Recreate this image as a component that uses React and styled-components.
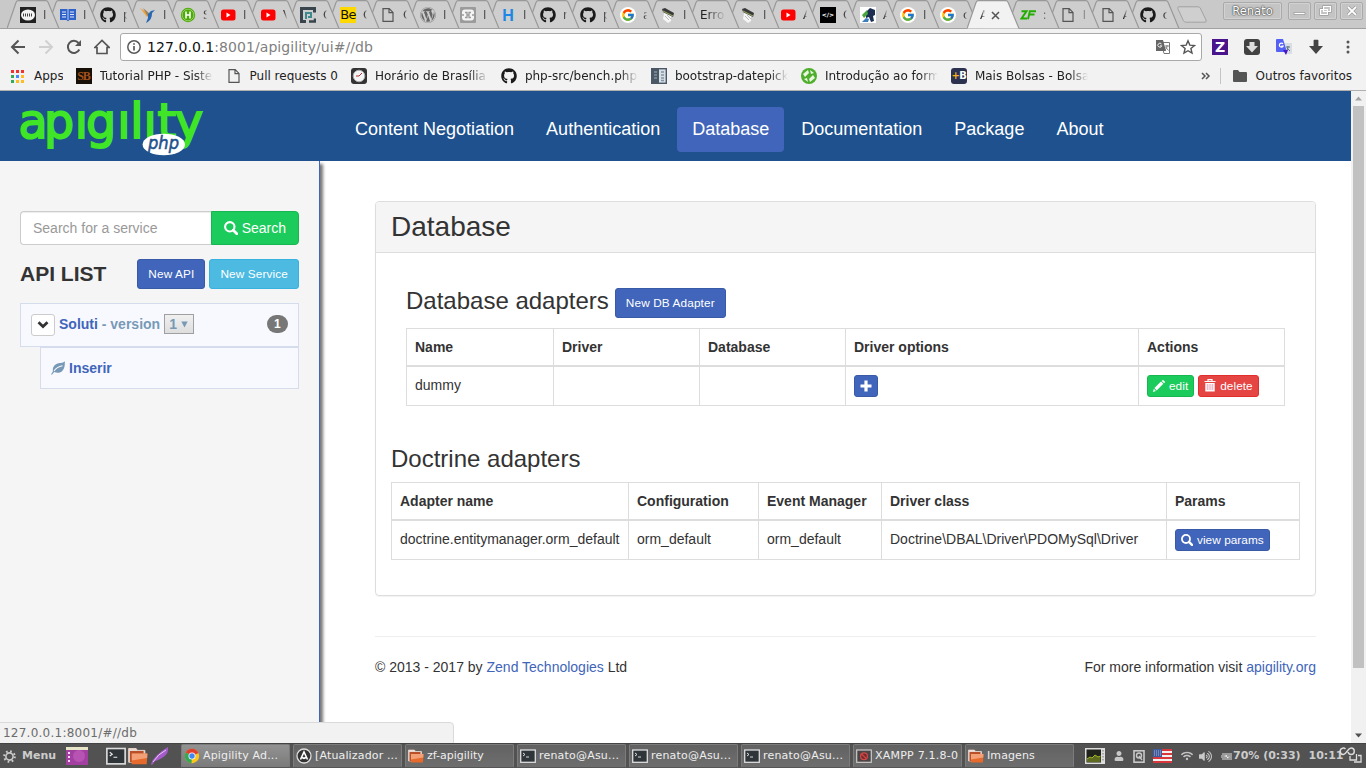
import React from 'react';
import styled, { createGlobalStyle, css } from 'styled-components';
import { FaGithub, FaWordpress, FaUser, FaWifi, FaVolumeUp } from 'react-icons/fa';
import { FcGoogle } from 'react-icons/fc';

const UI = '"DejaVu Sans", Verdana, sans-serif';
const PAGE = '"Liberation Sans", Arial, sans-serif';

const GlobalStyle = createGlobalStyle`
  * { box-sizing: border-box; }
  html, body { margin: 0; padding: 0; overflow: hidden; background: #fff; }
  svg { display: block; flex: none; }
`;

const Screen = styled.div`
  width: 1366px;
  height: 768px;
  display: flex;
  flex-direction: column;
  position: relative;
  overflow: hidden;
  font-family: ${PAGE};
  font-size: 14px;
  line-height: 20px;
  color: #333;
`;

/* ---------- browser tabs ---------- */

const TabStrip = styled.div`
  height: 29px;
  flex: none;
  display: flex;
  padding-left: 7px;
  background: #c9c9c9;
  border-bottom: 1px solid #a0a0a0;
  font-family: ${UI};
  font-size: 12px;
  color: #222;
`;

const TabBox = styled.div`
  flex: 0 0 39.92px;
  height: 29px;
  position: relative;
  z-index: ${(p) => p.$z};
  display: flex;
  align-items: flex-start;
  gap: 7px;
  padding: 7px 0 0 13px;
`;

const TabShape = styled.svg`
  position: absolute;
  left: 0;
  top: 0;
  z-index: -1;
`;

const TabLabel = styled.span`
  width: ${(p) => p.$w || 4}px;
  height: 16px;
  line-height: 16px;
  overflow: hidden;
  white-space: nowrap;
  -webkit-mask-image: linear-gradient(to right, #000 20%, transparent 105%);
  mask-image: linear-gradient(to right, #000 20%, transparent 105%);
`;

const CloseMark = styled.svg`
  margin: 4px 0 0 -1px;
`;

const NewTab = styled.svg`
  margin: 6px 0 0 10px;
`;

const WindowControls = styled.div`
  margin-left: auto;
  padding: 2px 3px 0 0;
  display: flex;
  gap: 3px;
`;

const WindowButton = styled.div`
  width: ${(p) => p.$w || 23}px;
  height: 18px;
  margin-right: ${(p) => p.$mr || 0}px;
  border: 1px solid #aaa;
  border-radius: 2px;
  background: #c4c4c4;
  box-shadow: inset 0 0 0 1px #d2d2d2;
  color: #fff;
  font-size: 11.5px;
  line-height: 15px;
  text-shadow: 0 0 1px #444, 0 0 1px #444, 0 0 2px #444;
  display: flex;
  justify-content: center;
  align-items: center;
`;

/* ---------- toolbar ---------- */

const Toolbar = styled.div`
  height: 36px;
  flex: none;
  display: flex;
  align-items: center;
  background: #f2f2f2;
  font-family: ${UI};
`;

const NavButtons = styled.div`
  display: flex;
  width: 120px;
  padding-left: 10px;
  gap: 12px;
`;

const Omnibox = styled.div`
  width: 1082px;
  height: 28px;
  display: flex;
  align-items: center;
  background: #fff;
  border: 1px solid #a9a9a9;
  border-radius: 3px;
  padding: 0 5px 0 6px;
  gap: 6px;
  font-size: 14px;
  letter-spacing: 0.06px;
  color: #808080;
  b { font-weight: 400; color: #111; }
`;

const OmniActions = styled.div`
  margin-left: auto;
  display: flex;
  gap: 9px;
`;

const Extensions = styled.div`
  display: flex;
  align-items: center;
  gap: 16px;
  padding-left: 10px;
`;

const BookmarkBar = styled.div`
  height: 26px;
  flex: none;
  display: flex;
  align-items: center;
  padding: 0 14px 3px 10px;
  background: #f2f2f2;
  border-bottom: 1px solid #b0b0b0;
  font-family: ${UI};
  font-size: 12px;
  color: #222;
`;

const Bookmark = styled.div`
  display: flex;
  flex: none;
  align-items: center;
  gap: 8px;
  margin-right: 13px;
  > span:last-child {
    width: ${(p) => p.$w || 113}px;
    overflow: hidden;
    white-space: nowrap;
    ${(p) =>
      !p.$w &&
      css`
        -webkit-mask-image: linear-gradient(to right, #000 84%, transparent 100%);
        mask-image: linear-gradient(to right, #000 84%, transparent 100%);
      `}
  }
`;

const BookmarkEnd = styled.div`
  margin-left: auto;
  display: flex;
  align-items: center;
  gap: 9px;
  white-space: nowrap;
`;

const Divider = styled.i`
  width: 1px;
  height: 16px;
  margin: 0 3px 0 0;
  background: #c4c4c4;
`;

/* ---------- page ---------- */

const Viewport = styled.div`
  height: 652px;
  flex: none;
  display: flex;
`;

const Page = styled.div`
  width: 1351px;
  display: flex;
  flex-direction: column;
`;

const Header = styled.header`
  height: 70px;
  flex: none;
  display: flex;
  background: #1e518d;
`;

const Brand = styled.div`
  width: 340px;
  padding: 5px 0 0 18px;
`;

const Nav = styled.nav`
  display: flex;
  gap: 2px;
  padding-top: 16px;
`;

const NavItem = styled.a`
  height: 45px;
  padding: 0 15px;
  border-radius: 4px;
  font-size: 18px;
  line-height: 44px;
  color: #fff;
  background: ${(p) => (p.$active ? '#4065ba' : 'transparent')};
`;

const Body = styled.div`
  flex: 1;
  display: flex;
  min-height: 0;
`;

const Sidebar = styled.aside`
  width: 320px;
  flex: none;
  padding: 50px 20px 0;
  background: #f5f5f5;
  border-right: 1px solid #4065ba;
  box-shadow: 3px 3px 3px #777;
  clip-path: inset(0 -10px 0 0);
`;

const SearchGroup = styled.div`
  display: flex;
  height: 34px;
`;

const SearchField = styled.div`
  width: 191px;
  padding: 6px 12px;
  background: #fff;
  border: 1px solid #ccc;
  border-right: 0;
  border-radius: 4px 0 0 4px;
  box-shadow: inset 0 1px 1px rgba(0, 0, 0, 0.075);
  color: #999;
`;

const tones = {
  primary: ['#4065ba', '#395aa6'],
  success: ['#1bcb5b', '#17b651'],
  info: ['#4dbae2', '#37b2df'],
  danger: ['#e54543', '#e02f2d'],
};

const Button = styled.span`
  display: inline-flex;
  align-items: center;
  white-space: nowrap;
  vertical-align: middle;
  color: #fff;
  background: ${(p) => tones[p.$tone][0]};
  border: 1px solid ${(p) => tones[p.$tone][1]};
  ${(p) =>
    p.$size === 'xs'
      ? css`
          height: 22px;
          padding: 0 5px;
          gap: 4px;
          font-size: 11.8px;
          letter-spacing: 0.05px;
          border-radius: 3px;
        `
      : p.$size === 'sm'
      ? css`
          height: 30px;
          padding: 0 10px;
          font-size: 11.8px;
          letter-spacing: 0.12px;
          border-radius: 3px;
        `
      : css`
          height: 34px;
          padding: 0 12px;
          gap: 4px;
          font-size: 14px;
          border-radius: 0 4px 4px 0;
        `}
`;

const ListHead = styled.div`
  display: flex;
  align-items: center;
  gap: 4px;
  margin-top: 14px;
  h3 {
    margin: 0 auto 0 0;
    font-size: 21px;
    line-height: 30px;
  }
`;

const ApiItem = styled.div`
  display: flex;
  align-items: center;
  height: ${(p) => (p.$child ? 42 : 44)}px;
  margin: ${(p) => (p.$child ? '0 0 0 20px' : '14px 0 0')};
  padding: 0 10px;
  background: #f8f9ff;
  border: 1px solid #d5dcec;
  font-weight: 700;
  color: #7899b6;
  gap: 4px;
  a { color: #4065ba; }
`;

const ApiName = styled.span`
  margin-bottom: 2px;
`;

const Toggle = styled.span`
  width: 24px;
  height: 22px;
  display: flex;
  align-items: center;
  justify-content: center;
  background: #fff;
  border: 1px solid #ccc;
  border-radius: 3px;
`;

const VersionSelect = styled.span`
  width: 30px;
  height: 20px;
  margin-bottom: 2px;
  display: flex;
  align-items: center;
  justify-content: space-between;
  padding: 0 5px 0 4px;
  background: linear-gradient(#f0f0f0, #dedede);
  border: 1px solid #a0a0a0;
`;

const Badge = styled.span`
  margin-left: auto;
  height: 18px;
  min-width: 21px;
  padding: 0 7px;
  margin-top: -3px;
  border-radius: 10px;
  background: #777;
  color: #fff;
  font-size: 12px;
  line-height: 18px;
`;

const Main = styled.main`
  flex: 1;
  padding: 40px 35px 0 55px;
`;

const Panel = styled.section`
  height: 395px;
  border: 1px solid #ddd;
  border-radius: 4px;
  box-shadow: 0 1px 1px rgba(0, 0, 0, 0.05);
`;

const PanelHead = styled.h2`
  margin: 0;
  height: 51px;
  padding: 0 15px;
  background: #f5f5f5;
  border-bottom: 1px solid #ddd;
  border-radius: 3px 3px 0 0;
  font-size: 28px;
  font-weight: 400;
  line-height: 49px;
`;

const Section = styled.div`
  padding: ${(p) => p.$pad};
`;

const SectionTitle = styled.h3`
  margin: 0 0 10px;
  height: ${(p) => p.$h}px;
  display: flex;
  align-items: center;
  gap: 6px;
  font-size: 24px;
  font-weight: 400;
  line-height: 26px;
  > span:first-child { margin-top: ${(p) => p.$shift}px; }
`;

const Table = styled.table`
  border-collapse: collapse;
  table-layout: fixed;
  width: ${(p) => p.$w}px;
  th, td {
    height: 40px;
    padding: 0 8px;
    border: 1px solid #ddd;
    text-align: left;
    white-space: nowrap;
    vertical-align: top;
  }
  th { height: 37px; border-bottom-width: 2px; padding-top: 8px; }
  td { padding-top: 8px; }
`;

const Actions = styled.div`
  display: flex;
  gap: 4px;
`;

const Footer = styled.footer`
  display: flex;
  justify-content: space-between;
  margin-top: 40px;
  padding-top: 20px;
  border-top: 1px solid #eee;
  a { color: #4065ba; }
`;

const Scrollbar = styled.div`
  width: 15px;
  display: flex;
  flex-direction: column;
  align-items: center;
  background: #f1f1f1;
`;

const Thumb = styled.div`
  width: 11px;
  height: 562px;
  margin-bottom: auto;
  background: #c1c1c1;
`;

const StatusBubble = styled.div`
  position: absolute;
  left: -1px;
  top: 722px;
  z-index: 5;
  width: 455px;
  height: 22px;
  padding-left: 3px;
  background: #f2f2f2;
  border: 1px solid #dadada;
  border-radius: 0 4px 0 0;
  font-family: ${UI};
  font-size: 12px;
  letter-spacing: 0.24px;
  color: #6c6c6c;
`;

/* ---------- desktop panel ---------- */

const Taskbar = styled.div`
  height: 25px;
  flex: none;
  position: relative;
  z-index: 6;
  display: flex;
  align-items: center;
  background: #525252;
  border-top: 1px solid #444;
  font-family: ${UI};
  font-size: 11px;
  color: #ddd;
`;

const Launchers = styled.div`
  width: 181px;
  display: flex;
  align-items: center;
  padding-left: 3px;
  b { margin: 0 10px 0 6px; width: 34px; color: #ccc; }
`;

const Tasks = styled.div`
  display: flex;
  gap: 3px;
`;

const Task = styled.div`
  width: 109px;
  height: 24px;
  display: flex;
  align-items: center;
  gap: 3px;
  padding-left: 2px;
  border: 1px solid #7c7c7c;
  border-bottom-color: #555;
  border-radius: 2px;
  background: ${(p) => (p.$active ? 'linear-gradient(#929292, #7a7a7a)' : 'linear-gradient(#626262, #6e6e6e)')};
  color: #eee;
  white-space: nowrap;
  overflow: hidden;
  span { letter-spacing: ${(p) => p.$ls || 0}px; }
`;

const Tray = styled.div`
  flex: 1;
  display: flex;
  align-items: center;
  padding-left: 11px;
  font-weight: 700;
  color: #ccc;
  white-space: nowrap;
`;

const Slot = styled.span`
  flex: none;
  width: ${(p) => p.$w}px;
`;

/* ---------- icons ---------- */

const DocIcon = () => (
  <svg width="16" height="16" viewBox="0 0 16 16" fill="none" stroke="#555" strokeWidth="1.2">
    <path d="M3 1.6h6.2l3.8 3.8v9H3zM9 1.6v4h4" />
  </svg>
);
const DiskIcon = () => (
  <svg width="16" height="16" viewBox="0 0 16 16">
    <rect width="16" height="16" fill="#222" />
    <ellipse cx="8" cy="8" rx="7" ry="5.5" fill="#f4f4f4" />
    <path d="M3.5 6.500v3M5.500 6.500v3M7.500 6.500v3M9.500 6.500v3M11.500 6.500v3" stroke="#444" fill="none" />
  </svg>
);
const BookIcon = () => (
  <svg width="16" height="16" viewBox="0 0 16 16">
    <path d="M0 2h7l1 1 1-1h7v11H9.500L8 14.200 6.500 13H0z" fill="#2f62c9" />
    <path d="M2 5h4M2 7.500h4M2 10h4M10 5h4M10 7.500h4M10 10h4" stroke="#dfe8fa" />
    <path d="M8 3v10" stroke="#dfe8fa" strokeWidth=".8" />
  </svg>
);
const BirdIcon = () => (
  <svg width="16" height="16" viewBox="0 0 16 16">
    <path d="M0 1l8 5-1 4z" fill="#f0a33a" />
    <path d="M3 1l6 5-1 4z" fill="#9b8560" />
    <path d="M8 7l3-3 4-1-3 3c0 5-2 8-6 10l2-5z" fill="#2867b2" />
  </svg>
);
const SwaggerIcon = () => (
  <svg width="16" height="16" viewBox="0 0 16 16">
    <circle cx="8" cy="8" r="7.2" fill="#4ea908" />
    <circle cx="8" cy="8" r="5.8" fill="none" stroke="#a8dc84" strokeWidth=".7" />
    <path d="M6 4.500v7M10 4.500v7M6 8h4" stroke="#fff" strokeWidth="1.5" />
  </svg>
);
const PIcon = () => (
  <svg width="16" height="16" viewBox="0 0 16 16" fill="none" stroke="#39454c" strokeWidth="3">
    <path d="M6 14.500H1.500V1.500h13v4" />
    <path d="M6 12V6h5v4H8" stroke="#3c8a8c" strokeWidth="2" />
    <path d="M9 14.500h6v-3" strokeWidth="2.5" />
  </svg>
);
const LetterBox = styled.span`
  width: 16px;
  height: 16px;
  flex: none;
  display: flex;
  align-items: center;
  justify-content: center;
  background: ${(p) => p.$bg || 'none'};
  border-radius: ${(p) => p.$r || 0}px;
  color: ${(p) => p.$fg};
  font: ${(p) => p.$font};
  letter-spacing: ${(p) => p.$ls || 0}px;
  i { font-style: normal; color: #f5b01a; }
`;
const XamppIcon = () => (
  <svg width="16" height="16" viewBox="0 0 16 16">
    <rect width="16" height="16" rx="1" fill="#9b9b9b" />
    <rect x="2" y="2.5" width="12" height="11" rx="3" fill="#f4f4f4" />
    <path d="M5 5.500h2v5H5M11 5.500H9v5h2M7 8h2M2 8h2M12 8h2" fill="none" stroke="#9b9b9b" strokeWidth="1.3" />
  </svg>
);
const StaplerIcon = () => (
  <svg width="16" height="16" viewBox="0 0 16 16">
    <path d="M4 6l7 3v5l-3 2-5-4z" fill="#f5f5f5" />
    <path d="M2 2l3-1 9 5-1 4L3 5z" fill="#383838" />
    <path d="M3 4l10 5" stroke="#9bb06a" />
    <path d="M5 9l4 4M7 8l4 4" stroke="#bbb" />
  </svg>
);
const HorseIcon = () => (
  <svg width="16" height="16" viewBox="0 0 16 16">
    <rect width="16" height="16" fill="#fff" />
    <path d="M6 5l4-4 5 2v5l-2 1 1 5-3 1-2-5-3 1z" fill="#1c2f52" />
    <path d="M2 8l5-5 1 4-4 4z" fill="#4aa53c" />
    <path d="M2 15l4-4 3 1-1 3z" fill="#3d7dc0" />
  </svg>
);
const ZfIcon = () => (
  <svg width="16" height="16" viewBox="0 0 16 16" fill="none" stroke="#22ac00">
    <path d="M1.500 4.300h5L1.500 11.500h5.500" strokeWidth="2" />
    <path d="M9 4.300h7M8.500 7.500h6M10 3.500L8 12.300" strokeWidth="1.9" />
  </svg>
);
const GoogleTab = () => (
  <LetterBox $bg="#fff" $r="8"><FcGoogle size={14} /></LetterBox>
);
const YtIcon = () => (
  <svg width="16" height="16" viewBox="0 0 16 16">
    <rect x="1" y="2.5" width="14.5" height="11" rx="2.5" fill="#f00" />
    <path d="M6.500 5.500v5l4-2.500z" fill="#fff" />
  </svg>
);

const SearchGlyph = ({ s = 14 }) => (
  <svg width={s} height={s} viewBox="0 0 14 14" fill="none" stroke="#fff">
    <circle cx="5.8" cy="5.8" r="4.7" strokeWidth="2.1" />
    <path d="M9.300 9.300l3.500 3.500" strokeWidth="2.8" strokeLinecap="round" />
  </svg>
);
const PencilGlyph = () => (
  <svg width="12" height="12" viewBox="0 0 12 12" fill="#fff">
    <path d="M0 12l.8-3.300L2.900 11zM1.400 8.100L8 1.500l2.300 2.300-6.600 6.600zM8.700.9l.7-.7q.5-.4 1 0l1.400 1.400q.4.500 0 1l-.7.7z" />
  </svg>
);
const TrashGlyph = () => (
  <svg width="12" height="14" viewBox="0 0 12 14">
    <path d="M.5 2.500h11M4 2.200V.7h4v1.500" stroke="#fff" strokeWidth="1.2" fill="none" />
    <path d="M1.300 4h9.400v8.500H1.300z" fill="#fff" />
    <path d="M3.300 5v6M5.100 5v6M6.900 5v6M8.700 5v6" stroke="#e9a0b8" strokeWidth=".9" />
  </svg>
);
const PlusGlyph = () => (
  <svg width="12" height="12" viewBox="0 0 12 12" stroke="#fff" strokeWidth="3.2">
    <path d="M6 .5v11M.5 6h11" />
  </svg>
);
const LeafGlyph = () => (
  <svg width="14" height="14" viewBox="0 0 14 14">
    <path d="M13.800.3c.3 4-.3 8.200-3 10.200-2.300 1.700-5.300 1.300-7.600.6L.9 13.800l-.8-.5 1.800-2.800C1.300 7.200 2.600 4.500 5.500 3c2.800-1.400 6-.5 8.300-2.700z" fill="#7899b6" />
    <path d="M3 10c1.500-2.200 4.500-4.400 8.500-5.200" stroke="#f8f9ff" strokeWidth="1.1" fill="none" />
  </svg>
);

const TerminalIcon = ({ s = 16 }) => (
  <svg width={s} height={s} viewBox="0 0 16 16">
    <rect x=".7" y="2" width="14.6" height="12.3" fill="#30353a" stroke="#ddd" strokeWidth="1.3" />
    <path d="M3 5l2 1.500L3 8M6 9h3" stroke="#eee" fill="none" strokeWidth=".9" />
  </svg>
);
const FolderIcon = ({ s = 16 }) => (
  <svg width={s} height={s} viewBox="0 0 16 16">
    <path d="M.5 2h6l1 1.500h6V13H.5z" fill="#e9d9d0" stroke="#f6e6dc" strokeWidth=".6" />
    <path d="M1.500 4h11v9h-11z" fill="#b9502a" />
    <path d="M3 6h12.500l-.5 8.500H3z" fill="#e56a2c" />
    <path d="M3 6h12.500l-.2 3.500L3 11.500z" fill="#f3a076" />
  </svg>
);
const ChromeIcon = () => (
  <svg width="16" height="16" viewBox="0 0 16 16">
    <circle cx="8" cy="8" r="7.2" fill="#fbc71d" />
    <path d="M8 8L1.700 4.500A7.200 7.200 0 0 1 14.500 5z" fill="#e0402f" />
    <path d="M8 8L1.700 4.500A7.200 7.200 0 0 0 7.500 15.200z" fill="#36a852" />
    <circle cx="8" cy="8" r="3.5" fill="#fff" />
    <circle cx="8" cy="8" r="2.7" fill="#4286f5" />
  </svg>
);
const UpdaterIcon = () => (
  <svg width="16" height="16" viewBox="0 0 16 16">
    <circle cx="8" cy="8" r="7" fill="#333" stroke="#ddd" strokeWidth="1.3" />
    <path d="M4.500 11.500L8 4l3.500 7.500M6 9.500l2 .8 2-.8" stroke="#fff" strokeWidth="1.6" fill="none" />
  </svg>
);
const XamppTask = () => (
  <svg width="16" height="16" viewBox="0 0 16 16">
    <rect x=".7" y="2" width="14.6" height="12.3" fill="#4b4444" stroke="#ccc" strokeWidth="1.2" />
    <circle cx="8" cy="8.3" r="3.4" fill="#732b2b" stroke="#d04848" strokeWidth="1.3" />
    <path d="M5.700 6l4.600 4.600" stroke="#d04848" strokeWidth="1.3" />
  </svg>
);

const Logo = () => (
  <svg width="190" height="64" viewBox="18 96 190 64" role="img" aria-label="apigility">
    <text
      x="18.5 44 74.8 86 117.300 130.300 143.500 157.500 175"
      y="138"
      fill="#3fe526"
      stroke="#3fe526"
      strokeWidth="1.9"
      fontFamily="DejaVu Sans, sans-serif"
      fontSize="47.5"
    >
      apıgılıty
    </text>
    <ellipse cx="163.8" cy="144.5" rx="21.2" ry="10.8" fill="#fff" />
    <text x="148" y="149" fill="#1e518d" stroke="#1e518d" strokeWidth=".5" fontFamily="DejaVu Sans, sans-serif" fontStyle="italic" fontSize="17" textLength="31" lengthAdjust="spacingAndGlyphs">
      php
    </text>
  </svg>
);

/* ---------- data ---------- */

const gh = <FaGithub size={16} color="#1b1b1b" />;

const tabs = [
  [<DiskIcon />, 'I'],
  [<BookIcon />, 'I'],
  [gh, 'p'],
  [<BirdIcon />, 'I'],
  [<SwaggerIcon />, 'S'],
  [<YtIcon />, 'I'],
  [<YtIcon />, 'V'],
  [<PIcon />, 'C'],
  [<LetterBox $bg="#ffd800" $fg="#111" $font={`13px/16px ${UI}`} $ls={-0.6}>Be</LetterBox>, 'C'],
  [<DocIcon />, 'C'],
  [<FaWordpress size={16} color="#666" />, 'I'],
  [<XamppIcon />, 'I'],
  [<LetterBox $fg="#1c87e5" $font={`700 16px/17px ${PAGE}`}>H</LetterBox>, 'I'],
  [gh, 'r'],
  [gh, 'p'],
  [<GoogleTab />, 'a'],
  [<StaplerIcon />, 'I'],
  [null, 'Erro', 25],
  [<StaplerIcon />, 'I'],
  [<YtIcon />, 'A'],
  [<LetterBox $bg="#000" $fg="#fff" $font={`700 6px/16px ${UI}`}>&lt;/&gt;</LetterBox>, 'C'],
  [<HorseIcon />, 'A'],
  [<GoogleTab />, 'I'],
  [<GoogleTab />, 'c'],
  null,
  [<ZfIcon />, ':', 3],
  [<DocIcon />, 'I', 2],
  [<DocIcon />, 'A'],
  [gh, 'c'],
];

const bookmarks = [
  [<LetterBox $bg="#171008" $fg="#a5501d" $font={'700 12px/16px "Liberation Serif", serif'} $ls={-1}>SB</LetterBox>, 'Tutorial PHP - Sistema'],
  [<DocIcon />, 'Pull requests 0', 88.4],
  [
    <svg width="16" height="16" viewBox="0 0 16 16">
      <rect width="16" height="16" rx="3" fill="#333" />
      <circle cx="8" cy="8" r="5.8" fill="#f4f4f4" stroke="#aaa" />
      <path d="M8 8l3-3M8 8H5" stroke="#a33" />
    </svg>,
    'Horário de Brasília - Hora',
  ],
  [gh, 'php-src/bench.php at'],
  [
    <svg width="16" height="16" viewBox="0 0 16 16">
      <rect x=".7" y=".7" width="14.6" height="14.6" fill="#d8dee5" stroke="#4a5866" strokeWidth="1.4" />
      <rect x="1" y="1" width="7" height="14" fill="#4a5866" />
      <path d="M3 4h3M3 7h3M3 10h3M10 4h3M10 7h3M10 10h3M10 12.500h3" stroke="#8393a3" strokeWidth="1.5" />
    </svg>,
    'bootstrap-datepicker',
  ],
  [
    <svg width="16" height="16" viewBox="0 0 16 16">
      <circle cx="8" cy="8" r="8" fill="#4fae2c" />
      <path d="M2 6l5-4 1 3-4 4zM14 10l-5 4-1-3 4-4zM9 2l4 3-3 1zM7 14l-4-3 3-1z" fill="#e8f6e2" />
    </svg>,
    'Introdução ao formato',
  ],
  [<LetterBox $bg="#2d3150" $r={3} $fg="#fff" $font={`700 10px/16px ${UI}`} $ls={-0.6}><i>+</i>B</LetterBox>, 'Mais Bolsas - Bolsas de'],
];

const tasks = [
  [<ChromeIcon />, 'Apigility Ad...', 0.15],
  [<UpdaterIcon />, '[Atualizador ...', 0.15],
  [<FolderIcon />, 'zf-apigility', 0],
  [<TerminalIcon />, 'renato@Asu...', 0.2],
  [<TerminalIcon />, 'renato@Asu...', 0.2],
  [<TerminalIcon />, 'renato@Asu...', 0.2],
  [<XamppTask />, 'XAMPP 7.1.8-0', 0.22],
  [<FolderIcon />, 'Imagens', 0.1],
];

function Tab({ tab, z }) {
  const active = tab === null;
  return (
    <TabBox $z={active ? 60 : z}>
      <TabShape width="53" height="29" viewBox="0 0 53 29">
        <path
          d="M0 28.500L9 2.500Q9.700.7 11.500.7H38.500Q40.500.7 41.200 2.500L52 28.500"
          fill={active ? '#f2f2f2' : '#cecece'}
          stroke="#999"
          strokeWidth="1.2"
        />
        {!active && <path d="M0 28.500H52" stroke="#a0a0a0" />}
      </TabShape>
      {active ? (
        <>
          <TabLabel $w={5}>A</TabLabel>
          <CloseMark width="9" height="9" viewBox="0 0 9 9" stroke="#555" strokeWidth="1.5">
            <path d="M1 1l7 7M8 1L1 8" />
          </CloseMark>
        </>
      ) : (
        <>
          {tab[0]}
          <TabLabel $w={tab[2]}>{tab[1]}</TabLabel>
        </>
      )}
    </TabBox>
  );
}

export default function App() {
  return (
    <Screen>
      <GlobalStyle />
      <TabStrip>
        {tabs.map((t, i) => (
          <Tab key={i} tab={t} z={40 - i} />
        ))}
        <NewTab width="31" height="18" viewBox="0 0 31 18">
          <path d="M1.500.8H21q1.500 0 2.200 1.200L29 14q.8 2.200-1 2.200H9q-1.800 0-2.600-1.500L.8 2.500Q.3.800 1.500.8z" fill="#cfcfcf" stroke="#a2a2a2" />
        </NewTab>
        <WindowControls>
          <WindowButton $w={59} $mr={3}>Renato</WindowButton>
          <WindowButton>
            <svg width="13" height="12" viewBox="0 0 13 12"><path d="M1 7.500h11v2H1z" fill="#fff" stroke="#888" strokeWidth=".6" /></svg>
          </WindowButton>
          <WindowButton>
            <svg width="13" height="12" viewBox="0 0 13 12" fill="#c4c4c4">
              <path d="M4.500 1.500h7v5h-7zM1.500 4.500h7v5h-7z" stroke="#888" strokeWidth="2.2" />
              <path d="M4.500 1.500h7v5h-7zM1.500 4.500h7v5h-7z" stroke="#fff" strokeWidth="1.2" />
            </svg>
          </WindowButton>
          <WindowButton>
            <svg width="12" height="12" viewBox="0 0 12 12">
              <path d="M2 2l8 8M10 2l-8 8" stroke="#888" strokeWidth="3" />
              <path d="M2 2l8 8M10 2l-8 8" stroke="#fff" strokeWidth="1.8" />
            </svg>
          </WindowButton>
        </WindowControls>
      </TabStrip>

      <Toolbar>
        <NavButtons>
          <svg width="16" height="16" viewBox="0 0 16 16" fill="none" stroke="#555" strokeWidth="2"><path d="M15 8H2.500M8.500 1.500L2 8l6.500 6.500" /></svg>
          <svg width="16" height="16" viewBox="0 0 16 16" fill="none" stroke="#d0d0d0" strokeWidth="2"><path d="M1 8h12.500M7.500 1.500L14 8l-6.500 6.500" /></svg>
          <svg width="16" height="16" viewBox="0 0 16 16" fill="none" stroke="#555" strokeWidth="2"><path d="M13.300 10.500A6 6 0 1 1 12.500 4" /><path d="M15 1v6H9z" fill="#555" stroke="none" /></svg>
          <svg width="16" height="16" viewBox="0 0 16 16" fill="none" stroke="#555" strokeWidth="1.7"><path d="M.8 8.500L8 1.500l7.200 7H13v6H3v-6z" /></svg>
        </NavButtons>
        <Omnibox>
          <svg width="14" height="14" viewBox="0 0 14 14" fill="none" stroke="#5a5a5a" strokeWidth="1.5"><circle cx="7" cy="7" r="6.2" /><path d="M7 6v4.500M7 3.200v1.600" strokeWidth="1.7" /></svg>
          <span><b>127.0.0.1</b>:8001/apigility/ui#//db</span>
          <OmniActions>
            <svg width="16" height="16" viewBox="0 0 16 16">
              <path d="M6 3.500h8.500v11H9z" fill="#fff" stroke="#777" />
              <path d="M1 1h7l3 11H1z" fill="#666" />
              <path d="M6.500 5a2 2 0 1 0 .3 1.800H5" stroke="#eee" fill="none" />
              <path d="M10 7h4M12 6v1c0 2-1 3-2 4M10.500 8l3 3.500" stroke="#777" fill="none" strokeWidth=".9" />
            </svg>
            <svg width="16" height="16" viewBox="0 0 16 16" fill="none" stroke="#555" strokeWidth="1.4"><path d="M8 1.800l1.800 4.300 4.700.4-3.600 3 1.100 4.600L8 11.700l-4 2.400 1.100-4.600-3.600-3 4.700-.4z" /></svg>
          </OmniActions>
        </Omnibox>
        <Extensions>
          <LetterBox $bg="#4a148c" $fg="#fff" $font={`700 14px/16px ${UI}`}>Z</LetterBox>
          <svg width="16" height="16" viewBox="0 0 16 16"><rect width="16" height="16" rx="3" fill="#424242" /><path d="M5.500 3h5v4H14l-6 6.500L2 7h3.500z" fill="#ddd" /></svg>
          <svg width="16" height="16" viewBox="0 0 16 16">
            <path d="M7 4h9v11h-6z" fill="#d9dde4" /><path d="M1 0h6l4 13H1q-1 0-1-1V1q0-1 1-1z" fill="#5560f5" /><path d="M7 11h5l-2 5z" fill="#4818c8" />
            <path d="M7 5a2 2 0 1 0 .2 2H5.300" stroke="#fff" fill="none" strokeWidth="1.2" /><path d="M10 8h4M12 7q0 3-1 4M11 9l3 3" stroke="#607080" fill="none" />
          </svg>
          <svg width="16" height="16" viewBox="0 0 16 16" fill="#444"><path d="M6.200.8h3.600q.6 0 .6.600V7H15l-7 8-7-8h4.600V1.400q0-.6.600-.6z" /></svg>
          <svg width="16" height="16" viewBox="0 0 16 16" fill="#555"><circle cx="8" cy="3" r="1.5" /><circle cx="8" cy="8" r="1.5" /><circle cx="8" cy="13" r="1.5" /></svg>
        </Extensions>
      </Toolbar>

      <BookmarkBar>
        <Bookmark $w={28.5}>
          <svg width="16" height="16" viewBox="0 0 16 16">
            {['#e33', '#e33', '#e33', '#3a5', '#48f', '#fb2', '#3a5', '#fb2', '#fb2'].map((c, i) => (
              <rect key={i} x={1 + (i % 3) * 5} y={2 + Math.floor(i / 3) * 5} width="3" height="3" fill={c} />
            ))}
          </svg>
          <span>Apps</span>
        </Bookmark>
        {bookmarks.map(([icon, text, w]) => (
          <Bookmark key={text} $w={w}>
            {icon}
            <span>{text}</span>
          </Bookmark>
        ))}
        <BookmarkEnd>
          <svg width="10" height="8" viewBox="0 0 10 8" fill="none" stroke="#555" strokeWidth="1.5"><path d="M1 1l3 3-3 3M5 1l3 3-3 3" /></svg>
          <Divider />
          <svg width="14" height="12" viewBox="0 0 14 12" fill="#555"><path d="M0 1q0-1 1-1h4l1.500 2H13q1 0 1 1v8q0 1-1 1H1q-1 0-1-1z" /></svg>
          <span>Outros favoritos</span>
        </BookmarkEnd>
      </BookmarkBar>

      <Viewport>
        <Page>
          <Header>
            <Brand><Logo /></Brand>
            <Nav>
              {['Content Negotiation', 'Authentication', 'Database', 'Documentation', 'Package', 'About'].map((n) => (
                <NavItem key={n} $active={n === 'Database'}>{n}</NavItem>
              ))}
            </Nav>
          </Header>
          <Body>
            <Sidebar>
              <SearchGroup>
                <SearchField>Search for a service</SearchField>
                <Button $tone="success"><SearchGlyph />Search</Button>
              </SearchGroup>
              <ListHead>
                <h3>API LIST</h3>
                <Button $tone="primary" $size="sm">New API</Button>
                <Button $tone="info" $size="sm">New Service</Button>
              </ListHead>
              <ApiItem>
                <Toggle>
                  <svg width="12" height="8" viewBox="0 0 12 8" fill="none" stroke="#333" strokeWidth="2.8"><path d="M1.500 1.300L6 5.500l4.500-4.200" /></svg>
                </Toggle>
                <ApiName><a>Soluti</a> - version</ApiName>
                <VersionSelect>
                  1
                  <svg width="7" height="7" viewBox="0 0 7 7" fill="#7899b6"><path d="M.3.500h6.400L3.500 6.500z" /></svg>
                </VersionSelect>
                <Badge>1</Badge>
              </ApiItem>
              <ApiItem $child>
                <LeafGlyph />
                <a>Inserir</a>
              </ApiItem>
            </Sidebar>
            <Main>
              <Panel>
                <PanelHead>Database</PanelHead>
                <Section $pad="35px 30px 0">
                  <SectionTitle $h={30} $shift={-4}>
                    <span>Database adapters</span>
                    <Button $tone="primary" $size="sm">New DB Adapter</Button>
                  </SectionTitle>
                  <Table $w={879}>
                    <colgroup><col width="147" /><col width="146" /><col width="146" /><col width="293" /><col width="146" /></colgroup>
                    <thead>
                      <tr><th>Name</th><th>Driver</th><th>Database</th><th>Driver options</th><th>Actions</th></tr>
                    </thead>
                    <tbody>
                      <tr>
                        <td>dummy</td><td /><td />
                        <td><Actions><Button $tone="primary" $size="xs"><PlusGlyph /></Button></Actions></td>
                        <td>
                          <Actions>
                            <Button $tone="success" $size="xs"><PencilGlyph />edit</Button>
                            <Button $tone="danger" $size="xs"><TrashGlyph />delete</Button>
                          </Actions>
                        </td>
                      </tr>
                    </tbody>
                  </Table>
                </Section>
                <Section $pad="40px 15px 0">
                  <SectionTitle $h={26} $shift={0}><span>Doctrine adapters</span></SectionTitle>
                  <Table $w={909}>
                    <colgroup><col width="237" /><col width="130" /><col width="123" /><col width="285" /><col width="133" /></colgroup>
                    <thead>
                      <tr><th>Adapter name</th><th>Configuration</th><th>Event Manager</th><th>Driver class</th><th>Params</th></tr>
                    </thead>
                    <tbody>
                      <tr>
                        <td>doctrine.entitymanager.orm_default</td>
                        <td>orm_default</td>
                        <td>orm_default</td>
                        <td>Doctrine\DBAL\Driver\PDOMySql\Driver</td>
                        <td><Actions><Button $tone="primary" $size="xs"><SearchGlyph s={12} />view params</Button></Actions></td>
                      </tr>
                    </tbody>
                  </Table>
                </Section>
              </Panel>
              <Footer>
                <span>© 2013 - 2017 by <a>Zend Technologies</a> Ltd</span>
                <span>For more information visit <a>apigility.org</a></span>
              </Footer>
            </Main>
          </Body>
        </Page>
        <Scrollbar>
          <svg width="15" height="15" viewBox="0 0 15 15" fill="#a3a3a3"><path d="M7.500 5.500l3.500 4H4z" /></svg>
          <Thumb />
          <svg width="15" height="15" viewBox="0 0 15 15" fill="#505050"><path d="M7.500 9.500L4 5.500h7z" /></svg>
        </Scrollbar>
      </Viewport>
      <StatusBubble>127.0.0.1:8001/#//db</StatusBubble>

      <Taskbar>
        <Launchers>
          <svg width="13" height="13" viewBox="0 0 13 13" fill="none" stroke="#ccc">
            <circle cx="6.5" cy="6.5" r="3.6" strokeWidth="1.6" />
            <circle cx="6.5" cy="6.5" r="5.3" strokeWidth="2" strokeDasharray="1.7 2.46" />
          </svg>
          <b>Menu</b>
          <svg width="22" height="18" viewBox="0 0 22 18">
            <rect width="22" height="18" fill="#a23fa0" /><rect width="22" height="3" fill="#e8e4c8" />
            <circle cx="13" cy="9" r="6" fill="#c560c0" opacity=".6" />
            <path d="M2 5h2v2H2zM2 9h2v2H2zM2 13h2v2H2z" fill="#f0d8f0" />
          </svg>
          <Slot $w={18} />
          <TerminalIcon s={20} />
          <Slot $w={2} />
          <FolderIcon s={20} />
          <Slot $w={3} />
          <svg width="18" height="20" viewBox="0 0 18 20"><path d="M0 18Q3 9 17 1q1 7-6 11-5 3-7 3l-3 4z" fill="#a45bc9" /><path d="M2 16Q7 8 15 4" stroke="#e3c8f0" fill="none" /></svg>
        </Launchers>
        <Tasks>
          {tasks.map(([icon, text, ls], i) => (
            <Task key={i} $active={i === 0} $ls={ls}>
              {icon}
              <span>{text}</span>
            </Task>
          ))}
        </Tasks>
        <Tray>
          <svg width="20" height="16" viewBox="0 0 20 16">
            <rect width="20" height="16" fill="#ddd" />
            <rect x="1.5" y="1.5" width="14.5" height="13" fill="#20231c" />
            <path d="M2 11l3-2 2 1 3-3 3 2 2.500-1v6H2z" fill="#5e6a1d" /><path d="M2 11l3-2 2 1 3-3 3 2 2.500-1" stroke="#a5b52c" fill="none" />
            <path d="M18 2v12" stroke="#777" strokeDasharray="1.5 1.5" />
          </svg>
          <Slot $w={9} />
          <FaUser size={10} color="#c8c8c8" />
          <Slot $w={9} />
          <svg width="12" height="13" viewBox="0 0 12 13"><rect x="1" y=".8" width="10" height="11.4" fill="none" stroke="#c8c8c8" strokeWidth="1.6" /><circle cx="6" cy="5.5" r="2.5" fill="none" stroke="#c8c8c8" strokeWidth="1.4" /><path d="M6 6l3 4" stroke="#c8c8c8" strokeWidth="1.3" /></svg>
          <Slot $w={8} />
          <svg width="19" height="14" viewBox="0 0 19 14">
            <rect width="19" height="14" fill="#f4f0f0" />
            <path d="M0 1h19M0 5h19M0 9h19M0 13h19" stroke="#d8373c" strokeWidth="2" />
            <rect width="9" height="8" fill="#3c5a9c" />
            <path d="M1 2h7M1 4h7M1 6h7" stroke="#dde" strokeWidth=".7" strokeDasharray="1 1" />
          </svg>
          <Slot $w={9} />
          <FaWifi size={12} color="#c4c4c4" />
          <Slot $w={6} />
          <FaVolumeUp size={13} color="#c8c8c8" />
          <Slot $w={9} />
          <svg width="11" height="7" viewBox="0 0 11 7"><path d="M0 2h1V0h10v7H1V5H0z" fill="#999" /><path d="M3 3l3-1v2l3-.5-3 2V4z" fill="#eee" /></svg>
          <Slot $w={1} />
          <Slot $w={75.5}>70% (0:33)</Slot>
          <Slot $w={30}>10:11</Slot>
          <svg width="24" height="20" viewBox="0 0 24 20" fill="none" stroke="#ddd" strokeWidth="1.5">
            <path d="M6.500 3a3.200 3.200 0 1 0-2 5.500C8 8 8.500 2 12 2a3.200 3.200 0 0 1 0 6.500c-1.500 0-2.500-1-3-2.500" />
            <path d="M17.500 8v6H11v-4M19 9.500h3V16h-7" strokeWidth="1.3" />
          </svg>
        </Tray>
      </Taskbar>
    </Screen>
  );
}
